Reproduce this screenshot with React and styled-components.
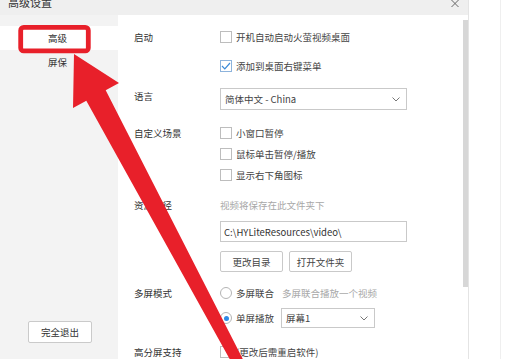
import React from 'react';
import styled, { createGlobalStyle } from 'styled-components';

const GlobalStyle = createGlobalStyle`
  html, body {
    margin: 0;
    padding: 0;
    background: #fff;
    overflow: hidden;
  }
  body {
    font-family: "Noto Sans CJK SC", "Microsoft YaHei", "Liberation Sans", sans-serif;
  }
`;

const Page = styled.div`
  position: relative;
  width: 506px;
  height: 359px;
  display: flex;
  overflow: hidden;
  background: #fff;
`;

const Dialog = styled.div`
  width: 468px;
  display: flex;
  flex-direction: column;
  border-right: 1px solid #e4e4e4;
`;

const TitleBar = styled.div`
  height: 15px;
  flex: none;
  display: flex;
  justify-content: space-between;
  align-items: flex-start;
  background: #efefef;
  overflow: hidden;
`;

const Title = styled.div`
  margin-top: -3px;
  padding-left: 8px;
  font-size: 11px;
  line-height: 11px;
  color: #333;
`;

const CloseIcon = styled.svg`
  margin-right: 9px;
  flex: none;
`;

const Body = styled.div`
  flex: 1;
  display: flex;
  min-height: 0;
`;

const Sidebar = styled.div`
  width: 118px;
  flex: none;
  display: flex;
  flex-direction: column;
  padding-top: 11px;
  box-sizing: border-box;
  background: #f3f3f3;
`;

const NavItem = styled.div`
  height: 24px;
  line-height: 24px;
  padding-right: 3px;
  text-align: center;
  font-size: 9.5px;
  color: #333;
  background: ${p => (p.$active ? '#fff' : 'transparent')};
`;

const Spacer = styled.div`
  flex: 1;
`;

const ExitButton = styled.button`
  align-self: center;
  width: 64px;
  height: 22px;
  margin: 0 0 16px 2px;
  padding: 0;
  border: 1px solid #cacaca;
  border-radius: 2px;
  background: #fff;
  font-family: inherit;
  font-size: 9.5px;
  color: #333;
`;

const Main = styled.div`
  flex: 1;
  display: flex;
  background: #fff;
`;

const Content = styled.div`
  flex: 1;
  padding: 12px 0 0 16px;
  display: flex;
  flex-direction: column;
`;

const Section = styled.div`
  display: grid;
  grid-template-columns: 86px 1fr;
  margin-top: ${p => p.$gap || 0}px;
`;

const Label = styled.div`
  line-height: 20px;
  font-size: 9.5px;
  color: #333;
  margin-top: ${p => p.$shift || 0}px;
`;

const Controls = styled.div`
  display: flex;
  flex-direction: column;
  gap: ${p => p.$gap || 0}px;
`;

const Line = styled.div`
  height: ${p => p.$h || 20}px;
  display: flex;
  align-items: center;
  gap: ${p => p.$gap || 4}px;
  font-size: 9.5px;
  color: #444;
`;

const Box = styled.span`
  width: 12px;
  height: 12px;
  flex: none;
  box-sizing: border-box;
  border: 1px solid ${p => (p.$checked ? '#8db3dc' : '#bdbdbd')};
  background: #fff;
  display: flex;
  align-items: center;
  justify-content: center;
`;

const Radio = styled.span`
  width: 12px;
  height: 12px;
  flex: none;
  box-sizing: border-box;
  border-radius: 50%;
  border: 1px solid #b4b4b4;
  background: #fff;
  display: flex;
  align-items: center;
  justify-content: center;
  &::after {
    content: '';
    width: 5px;
    height: 5px;
    border-radius: 50%;
    background: ${p => (p.$checked ? '#2f8be6' : 'transparent')};
  }
`;

const Hint = styled.span`
  font-size: 9.5px;
  color: #a8a8a8;
`;

const Select = styled.div`
  width: ${p => p.$w}px;
  height: ${p => p.$h}px;
  box-sizing: border-box;
  border: 1px solid #c9c9c9;
  background: #fff;
  display: flex;
  align-items: center;
  justify-content: space-between;
  padding: 0 6px 0 4px;
  font-size: 9.5px;
  color: #444;
`;

const Input = styled.div`
  width: 187px;
  height: 21px;
  box-sizing: border-box;
  border: 1px solid #c9c9c9;
  display: flex;
  align-items: center;
  padding-left: 3px;
  font-size: 9.5px;
  color: #333;
`;

const ButtonRow = styled.div`
  display: flex;
  gap: 6px;
`;

const Button = styled.button`
  width: 63px;
  height: 21px;
  padding: 0;
  border: 1px solid #c9c9c9;
  border-radius: 2px;
  background: #fff;
  font-family: inherit;
  font-size: 9.5px;
  color: #444;
`;

const ScrollTrack = styled.div`
  width: 5px;
  flex: none;
  padding-top: 5px;
`;

const ScrollThumb = styled.div`
  height: 267px;
  background: #d7d7d7;
`;

const Outside = styled.div`
  width: 31px;
  flex: none;
  border-right: 1px solid #efefef;
`;

const Overlay = styled.svg`
  position: absolute;
  left: 0;
  top: 0;
  pointer-events: none;
`;

const Chevron = () => (
  <svg width="8" height="5" viewBox="0 0 8 5">
    <path d="M0.5 0.5 L4 4 L7.5 0.5" fill="none" stroke="#777" strokeWidth="1" />
  </svg>
);

const Tick = () => (
  <svg width="10" height="8" viewBox="0 0 10 8">
    <path d="M1 4 L3.8 6.8 L9 1" fill="none" stroke="#3a8ad8" strokeWidth="1.2" />
  </svg>
);

const Check = ({ checked, children }) => (
  <Line>
    <Box $checked={checked}>{checked && <Tick />}</Box>
    <span>{children}</span>
  </Line>
);

export default function App() {
  return (
    <Page>
      <GlobalStyle />
      <Dialog>
        <TitleBar>
          <Title>高级设置</Title>
          <CloseIcon width="8" height="8" viewBox="0 0 8 8">
            <path d="M0.5 0 L7.5 7 M7.5 0 L0.5 7" stroke="#666" strokeWidth="1" />
          </CloseIcon>
        </TitleBar>
        <Body>
          <Sidebar>
            <NavItem $active>高级</NavItem>
            <NavItem>屏保</NavItem>
            <Spacer />
            <ExitButton>完全退出</ExitButton>
          </Sidebar>
          <Main>
            <Content>
              <Section>
                <Label>启动</Label>
                <Controls $gap={9}>
                  <Check>开机自动启动火萤视频桌面</Check>
                  <Check checked>添加到桌面右键菜单</Check>
                </Controls>
              </Section>
              <Section $gap={12}>
                <Label $shift={-2}>语言</Label>
                <Select $w={187} $h={22}>
                  <span>简体中文 - China</span>
                  <Chevron />
                </Select>
              </Section>
              <Section $gap={13}>
                <Label>自定义场景</Label>
                <Controls $gap={1}>
                  <Check>小窗口暂停</Check>
                  <Check>鼠标单击暂停/播放</Check>
                  <Check>显示右下角图标</Check>
                </Controls>
              </Section>
              <Section $gap={10}>
                <Label>资源路径</Label>
                <Controls>
                  <Line>
                    <Hint>视频将保存在此文件夹下</Hint>
                  </Line>
                  <Input style={{ marginTop: 6 }}>C:\HYLiteResources\video\</Input>
                  <ButtonRow style={{ marginTop: 9 }}>
                    <Button>更改目录</Button>
                    <Button>打开文件夹</Button>
                  </ButtonRow>
                </Controls>
              </Section>
              <Section $gap={11}>
                <Label>多屏模式</Label>
                <Controls $gap={5}>
                  <Line>
                    <Radio />
                    <span>多屏联合</span>
                    <Hint style={{ marginLeft: 4 }}>多屏联合播放一个视频</Hint>
                  </Line>
                  <Line>
                    <Radio $checked />
                    <span>单屏播放</span>
                    <Select $w={94} $h={20} style={{ marginLeft: 3 }}>
                      <span>屏幕1</span>
                      <Chevron />
                    </Select>
                  </Line>
                </Controls>
              </Section>
              <Section $gap={14}>
                <Label>高分屏支持</Label>
                <Check>(更改后需重启软件)</Check>
              </Section>
            </Content>
            <ScrollTrack>
              <ScrollThumb />
            </ScrollTrack>
          </Main>
        </Body>
      </Dialog>
      <Outside />
      <Overlay width="506" height="359" viewBox="0 0 506 359">
        <rect x="20.7" y="27.4" width="67.6" height="23.5" rx="3" fill="none" stroke="#e8202a" strokeWidth="4.8" />
        <polygon
          points="74,54 119,83 105.7,90.3 253.5,380 241.3,380 86.3,100.7 73,108"
          fill="#e8202a"
        />
      </Overlay>
    </Page>
  );
}
